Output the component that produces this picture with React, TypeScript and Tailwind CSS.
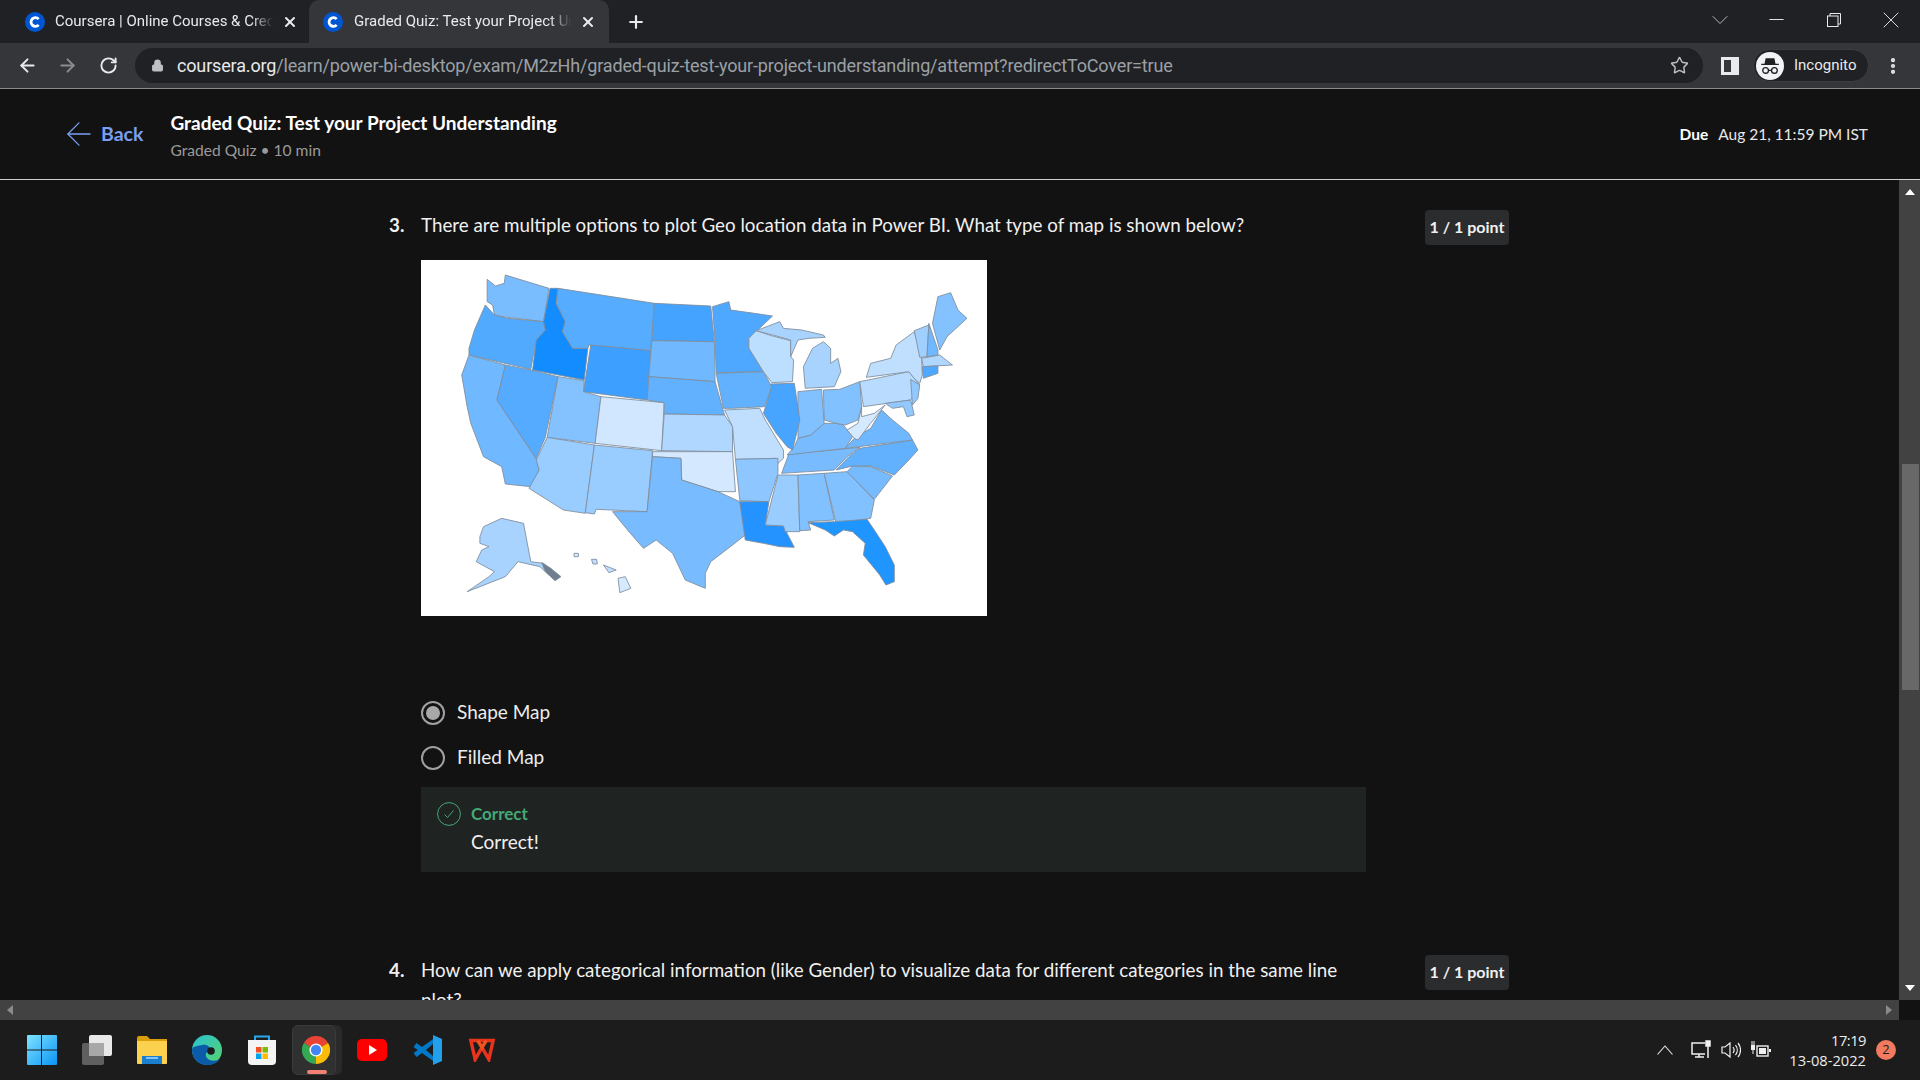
import React from "react";
import { ArrowLeft, ArrowRight, RotateCw, Lock, Star, X, Plus, ChevronDown, Minus, MoreVertical } from "lucide-react";

const states: [string, string][] = [
  ["#7abdff", "185,58 208,78 232,70 235,45 355,85 340,185 290,178 240,172 205,165 200,135 185,125"],
  ["#52aaff", "180,135 205,165 240,175 340,185 345,210 320,240 305,328 135,285 135,265 150,210"],
  ["#70b8ff", "135,285 235,315 212,420 322,600 328,630 305,680 235,672 225,620 175,590 140,490 130,440 115,345"],
  ["#55abff", "235,315 305,330 380,350 345,532 320,595 212,420"],
  ["#138cff", "358,85 380,85 375,130 400,185 392,215 420,265 462,265 452,360 310,330 320,240 345,210 340,185"],
  ["#56acff", "380,85 645,130 635,272 465,255 462,265 420,265 392,215 400,185 375,130"],
  ["#3d9fff", "470,255 635,272 625,420 450,395"],
  ["#84c2ff", "380,350 452,362 450,395 498,410 482,550 350,532"],
  ["#99ccff", "350,532 480,555 455,760 395,750 300,685 328,630 320,600"],
  ["#d0e7ff", "498,410 672,428 665,572 482,550"],
  ["#99ccff", "480,555 640,572 625,755 485,748 480,762 455,758"],
  ["#44a3ff", "645,130 800,138 810,245 638,242"],
  ["#70b8ff", "638,242 810,245 812,365 630,350"],
  ["#62b1ff", "630,350 812,365 838,465 672,462 672,428 625,420"],
  ["#b0d7ff", "672,462 838,465 860,500 860,575 665,572"],
  ["#d4e8ff", "640,575 860,575 868,695 820,695 720,660 718,595 640,590"],
  ["#78bbff", "640,590 718,595 720,660 820,695 880,725 895,825 860,855 800,905 785,940 785,985 730,960 695,880 650,840 615,865 575,815 530,755 625,755"],
  ["#4fa8ff", "805,140 850,125 855,150 920,160 970,168 905,235 905,265 945,335 815,338 812,245"],
  ["#62b1ff", "815,340 945,335 968,380 948,440 860,445 835,445"],
  ["#c0dfff", "838,450 935,445 950,480 1000,570 1000,595 985,610 980,595 868,598 860,500"],
  ["#8ec6ff", "868,598 985,595 985,640 960,725 880,722"],
  ["#2493ff", "880,725 960,725 950,795 1005,798 1010,820 1030,862 990,860 945,850 895,840"],
  ["#99ccff", "985,645 1040,645 1045,815 1005,815 1000,798 950,795"],
  ["#82c1ff", "1040,645 1112,640 1140,780 1068,785 1075,810 1045,812"],
  ["#82c1ff", "1112,640 1175,635 1250,720 1240,775 1145,790"],
  ["#1e95ff", "1068,788 1140,785 1230,778 1250,810 1280,860 1305,915 1305,965 1282,975 1265,945 1220,885 1225,850 1190,815 1165,810 1140,828 1115,810"],
  ["#76baff", "1175,635 1190,618 1240,620 1300,648 1250,718"],
  ["#62b1ff", "1145,630 1180,590 1210,565 1355,540 1370,570 1345,600 1305,645 1240,618 1190,618"],
  ["#78bbff", "995,640 1015,582 1210,562 1175,590 1140,630"],
  ["#78bbff", "1010,585 1030,560 1040,535 1075,525 1110,490 1145,490 1165,495 1190,530 1170,565"],
  ["#6fb7ff", "1170,565 1195,535 1240,505 1270,450 1300,480 1345,520 1355,540"],
  ["#d5e9ff", "1175,510 1205,490 1215,440 1215,470 1250,460 1280,435 1240,490 1205,540 1195,535"],
  ["#82c1ff", "1110,390 1155,388 1210,365 1215,440 1205,480 1170,495 1145,490 1112,480"],
  ["#82c1ff", "1040,395 1105,388 1112,490 1075,525 1040,535"],
  ["#47a4ff", "965,372 1030,370 1045,480 1025,570 1010,560 980,520 945,460 968,380"],
  ["#bcdeff", "905,235 925,212 970,228 1020,242 1020,290 1028,300 1025,365 968,368 945,335 905,265"],
  ["#a8d3ff", "1060,385 1055,320 1080,265 1110,245 1130,265 1130,310 1150,295 1158,335 1140,380"],
  ["#a8d3ff", "925,212 990,185 1000,205 1050,210 1110,225 1115,232 1070,235 1040,240 1020,290 1020,240 970,225"],
  ["#b8dbff", "1210,365 1345,335 1375,375 1350,420 1220,440"],
  ["#c0dfff", "1228,352 1240,310 1295,295 1310,255 1360,215 1380,290 1382,345 1375,370 1360,355 1345,335"],
  ["#90c8ff", "1350,358 1375,375 1370,415 1355,435"],
  ["#90c8ff", "1280,430 1350,420 1360,465 1340,470 1330,440 1300,445"],
  ["#a0d0ff", "1360,212 1400,195 1395,290 1375,292"],
  ["#70b8ff", "1400,190 1425,270 1425,285 1395,290"],
  ["#84c2ff", "1410,190 1425,110 1460,98 1480,150 1505,175 1450,230 1430,270"],
  ["#b0d7ff", "1380,295 1430,285 1465,315 1385,320"],
  ["#4fa8ff", "1382,320 1425,318 1425,340 1385,355"],
  ["#a8d3ff", "175,800 225,775 285,790 305,905 340,910 385,950 370,960 330,920 270,905 235,950 130,995 190,950 205,935 155,905 170,870 190,860 165,850 165,830"],
  ["#6f7f90", "335,908 360,925 388,950 372,962 345,935"],
  ["#d5e9ff", "545,955 565,950 580,985 550,998"],
  ["#d5e9ff", "424,880 436,880 436,890 424,890"],
  ["#c0dfff", "472,898 486,898 488,912 476,912"],
  ["#c0dfff", "505,915 540,930 520,938"],
];

function UsaMap() {
  return (
    <div className="w-[566px] h-[356px] bg-white overflow-hidden">
      <svg viewBox="3 0 1557 1068" preserveAspectRatio="none" className="w-full h-full blur-[0.5px]">
        {states.map((s, i) => (
          <polygon key={i} points={s[1]} fill={s[0]} stroke="#7f8d9c" strokeWidth="2.5" strokeLinejoin="round" />
        ))}
      </svg>
    </div>
  );
}

function Favicon() {
  return (
    <svg viewBox="0 0 20 20" className="w-5 h-5 shrink-0">
      <circle cx="10" cy="10" r="10" fill="#0056d2" />
      <path d="M13.6 7.2a4.3 4.3 0 1 0 0 5.6" fill="none" stroke="#fff" strokeWidth="2.8" />
    </svg>
  );
}

function Tab(props: { title: string; active?: boolean }) {
  return (
    <div className={props.active ? "w-[300px] h-[43px] flex items-center pl-[14px] bg-[#35363a] rounded-t-[10px]" : "w-[293px] h-[43px] flex items-center pl-[9px]"}>
      <Favicon />
      <div className={props.active ? "ml-[11px] w-[217px] h-[20px] leading-[18px] whitespace-nowrap overflow-hidden text-[15px] text-[#e8eaed] [mask-image:linear-gradient(to_right,black_90%,transparent)]" : "ml-[10px] w-[218px] h-[20px] leading-[18px] whitespace-nowrap overflow-hidden text-[15px] text-[#e8eaed] [mask-image:linear-gradient(to_right,black_90%,transparent)]"}>{props.title}</div>
      <X size={16} strokeWidth={3} className="ml-[9px] text-[#e8eaed]" />
    </div>
  );
}

function ChromeBar() {
  return (
    <div className="font-['Roboto',sans-serif]">
      <div className="h-[43px] bg-[#202124] flex items-center pl-[16px]">
        <Tab title="Coursera | Online Courses & Credentials" />
        <Tab title="Graded Quiz: Test your Project Understanding" active />
        <Plus size={20} strokeWidth={2.6} className="ml-[17px] text-[#e8eaed]" />
        <div className="ml-auto flex items-center text-[#e8eaed] pb-[4px] -ml-[2px]">
          <div className="w-[57px] flex justify-center"><ChevronDown size={28} strokeWidth={0.8} className="text-[#bdc1c6]" /></div>
          <div className="w-[57px] flex justify-center"><Minus size={23} strokeWidth={1} /></div>
          <div className="w-[57px] flex justify-center">
            <svg viewBox="0 0 14 14" className="w-[14px] h-[14px]" fill="none" stroke="#e8eaed" strokeWidth="1">
              <rect x="0.5" y="3" width="10.5" height="10.5" />
              <path d="M3 3V.5h10.5V11H11" />
            </svg>
          </div>
          <div className="w-[58px] pr-[1px] flex justify-center"><X size={28} strokeWidth={0.8} /></div>
        </div>
      </div>
      <div className="h-[45px] bg-[#35363a] flex items-center">
        <ArrowLeft size={21} strokeWidth={2.2} className="ml-[17px] text-[#e8eaed]" />
        <ArrowRight size={21} strokeWidth={2.2} className="ml-[19px] text-[#8a8c90]" />
        <RotateCw size={19} strokeWidth={2.4} className="ml-[21px] text-[#e8eaed]" />
        <div className="ml-[17px] w-[1568px] h-[35px] bg-[#202124] rounded-full flex items-center pl-[16px]">
          <Lock size={13} fill="#bdc1c6" strokeWidth={2} className="text-[#bdc1c6]" />
          <div className="ml-[13px] text-[18px] tracking-[-0.16px] whitespace-nowrap text-[#9aa0a6]">
            <span className="text-[#e8eaed]">coursera.org</span>/learn/power-bi-desktop/exam/M2zHh/graded-quiz-test-your-project-understanding/attempt?redirectToCover=true
          </div>
          <Star size={19} strokeWidth={1.8} className="ml-auto mr-[14px] text-[#bdc1c6]" />
        </div>
        <div className="ml-[18px] w-[18px] h-[18px] border-[3px] border-[#e8eaed] border-r-[8px]" />
        <div className="ml-[14px] w-[116px] h-[33px] rounded-full bg-[#202124] border border-[#3c3d41] flex items-center pl-[2px]">
          <div className="w-[28px] h-[28px] rounded-full bg-[#f1f3f4] flex items-center justify-center">
            <svg viewBox="0 0 20 20" className="w-[22px] h-[22px]" fill="#202124">
              <path d="M6 3h8l1 5h3v1H2V8h3z" />
              <circle cx="6" cy="14" r="2.6" fill="none" stroke="#202124" strokeWidth="1.2" />
              <circle cx="14" cy="14" r="2.6" fill="none" stroke="#202124" strokeWidth="1.2" />
              <path d="M8.500 14h3" stroke="#202124" strokeWidth="1.2" />
            </svg>
          </div>
          <span className="ml-[10px] text-[15px] text-[#e8eaed]">Incognito</span>
        </div>
        <MoreVertical size={20} strokeWidth={3} className="ml-[14px] text-[#e8eaed]" />
      </div>
      <div className="h-px bg-[#8a8a8a]" />
    </div>
  );
}

function PageHeader() {
  return (
    <div className="h-[91px] flex items-center border-b border-[#d0d0d0] pl-[60px] pr-[52px]">
      <ArrowLeft size={38} strokeWidth={0.8} className="text-[#7a9ef0]" />
      <span className="ml-[3px] font-bold text-[19.5px] text-[#7a9ef0]">Back</span>
      <div className="ml-[27px] pt-[3px]">
        <div className="font-bold text-[19px] leading-[27px] text-white">Graded Quiz: Test your Project Understanding</div>
        <div className="mt-[2px] text-[15.6px] leading-[25px] text-[#9a9a9a]">Graded Quiz • 10 min</div>
      </div>
      <div className="ml-auto text-[15.5px] text-[#e8e8e8] pt-[1px]">
        <span className="font-bold text-white mr-[10px]">Due</span>Aug 21, 11:59 PM IST
      </div>
    </div>
  );
}

function PointBadge() {
  return <div className="shrink-0 w-[84px] h-[35px] pb-[2px] rounded bg-[#2b2c2e] flex items-center justify-center font-bold text-[16px] text-[#f0f0f0]">1 / 1 point</div>;
}

function Radio(props: { label: string; checked?: boolean }) {
  return (
    <div className="h-[45px] flex items-center">
      <div className="w-[24px] h-[24px] rounded-full border-2 border-[#a0a0a0] flex items-center justify-center">
        {props.checked && <div className="w-[14px] h-[14px] rounded-full bg-[#a8a8a8]" />}
      </div>
      <span className="ml-[12px] text-[19px] text-[#ececec]">{props.label}</span>
    </div>
  );
}

function Question() {
  return (
    <div className="pl-[389px] pt-[30px]">
      <div className="flex h-[35px] w-[1120px]">
        <span className="w-[32px] font-bold text-[18.8px] leading-[30px] text-[#f0f0f0]">3.</span>
        <span className="text-[18.8px] leading-[30px] text-[#f0f0f0]">There are multiple options to plot Geo location data in Power BI. What type of map is shown below?</span>
        <div className="ml-auto"><PointBadge /></div>
      </div>
      <div className="ml-[32px] mt-[15px]">
        <UsaMap />
      </div>
      <div className="ml-[32px] mt-[74px] w-[945px]">
        <Radio label="Shape Map" checked />
        <Radio label="Filled Map" />
        <div className="mt-[7px] h-[85px] bg-[#1f2322] flex pl-[16px] pt-[15px]">
          <svg viewBox="0 0 24 24" className="w-[24px] h-[24px]" fill="none" stroke="#45a876" strokeWidth="1">
            <circle cx="12" cy="12" r="11.4" />
            <path d="M7.500 12.500l3 3 6-7" />
          </svg>
          <div className="ml-[10px]">
            <div className="font-bold text-[17px] leading-[24px] text-[#45a876]">Correct</div>
            <div className="text-[19px] leading-[32px] text-[#f0f0f0]">Correct!</div>
          </div>
        </div>
      </div>
      <div className="flex w-[1120px] mt-[83px]">
        <span className="w-[32px] font-bold text-[18.8px] leading-[30px] text-[#f0f0f0]">4.</span>
        <span className="w-[945px] text-[18.8px] leading-[30px] text-[#f0f0f0]">How can we apply categorical information (like Gender) to visualize data for different categories in the same line plot?</span>
        <div className="ml-auto"><PointBadge /></div>
      </div>
    </div>
  );
}

function VScroll() {
  return (
    <div className="w-[21px] bg-[#424242] flex flex-col items-center">
      <div className="mt-[9px] w-0 h-0 border-x-[5px] border-x-transparent border-b-[6px] border-b-white" />
      <div className="mt-[269px] ml-[1px] w-[17px] h-[226px] bg-[#686868]" />
      <div className="mt-auto mb-[9px] w-0 h-0 border-x-[5px] border-x-transparent border-t-[6px] border-t-white" />
    </div>
  );
}

function HScroll() {
  return (
    <div className="h-[20px] flex bg-[#121212]">
      <div className="w-[1899px] bg-[#424242] flex items-center px-[7px]">
        <div className="w-0 h-0 border-y-[5px] border-y-transparent border-r-[6px] border-r-[#8a8a8a]" />
        <div className="ml-auto w-0 h-0 border-y-[5px] border-y-transparent border-l-[6px] border-l-[#8a8a8a]" />
      </div>
    </div>
  );
}

function TaskIcon(props: { children: React.ReactNode }) {
  return <div className="w-[55px] h-[60px] flex items-center justify-center">{props.children}</div>;
}

function Taskbar() {
  return (
    <div className="h-[60px] bg-[#1c1c1c] flex items-center pl-[14px] font-['Open_Sans',sans-serif]">
      <TaskIcon>
        <svg viewBox="0 0 30 30" className="w-[30px] h-[30px]">
          <defs>
            <linearGradient id="win" x1="0" y1="0" x2="1" y2="1">
              <stop offset="0" stopColor="#7fe3ff" />
              <stop offset="1" stopColor="#0a94f5" />
            </linearGradient>
          </defs>
          <path d="M0 1a1 1 0 0 1 1-1h13v14.500H0zM15 0h14a1 1 0 0 1 1 1v13.500H15zM0 15.500h14V30H1a1 1 0 0 1-1-1zM15 15.500h15V29a1 1 0 0 1-1 1H15z" fill="url(#win)" />
        </svg>
      </TaskIcon>
      <TaskIcon>
        <svg viewBox="0 0 30 30" className="w-[30px] h-[30px]">
          <rect x="0" y="8" width="22" height="22" rx="2" fill="#5f5f5f" />
          <rect x="7" y="0" width="23" height="21" rx="2" fill="#e8e8e8" />
          <rect x="7" y="8" width="15" height="13" fill="#a8a8a8" />
        </svg>
      </TaskIcon>
      <TaskIcon>
        <svg viewBox="0 0 30 28" className="w-[30px] h-[28px]">
          <path d="M0 2a2 2 0 0 1 2-2h8l3 3h17v4H0z" fill="#d89f0a" />
          <path d="M0 5h30v22a1 1 0 0 1-1 1H1a1 1 0 0 1-1-1z" fill="#fcd14d" />
          <rect x="5" y="20" width="20" height="8" fill="#1b7fd0" />
          <rect x="9" y="21" width="12" height="2" fill="#7fc4f0" />
        </svg>
      </TaskIcon>
      <TaskIcon>
        <svg viewBox="0 0 30 30" className="w-[30px] h-[30px]">
          <defs>
            <linearGradient id="edge" x1="0" y1="0" x2="1" y2="1">
              <stop offset="0" stopColor="#2bc3d2" />
              <stop offset="1" stopColor="#56d26a" />
            </linearGradient>
          </defs>
          <circle cx="15" cy="15" r="15" fill="url(#edge)" />
          <path d="M0 15C0 24 7 30 15 30c6 0 10-2 13-6-5 3-13 2-14-3-1-3 2-5 4-5 1-4-3-7-8-6C4 11 0 12 0 15z" fill="#0c5ba8" />
          <circle cx="19" cy="16" r="3.800" fill="#1c1c1c" />
        </svg>
      </TaskIcon>
      <TaskIcon>
        <svg viewBox="0 0 30 30" className="w-[30px] h-[30px]">
          <path d="M8 6V1.500h14V6" fill="none" stroke="#2aa7e8" strokeWidth="2" />
          <path d="M1 5h28v21a4 4 0 0 1-4 4H5a4 4 0 0 1-4-4z" fill="#f4f4f4" />
          <rect x="9" y="12" width="5.500" height="5.500" fill="#f25022" />
          <rect x="15.500" y="12" width="5.500" height="5.500" fill="#7fba00" />
          <rect x="9" y="18.500" width="5.500" height="5.500" fill="#00a4ef" />
          <rect x="15.500" y="18.500" width="5.500" height="5.500" fill="#ffb900" />
        </svg>
      </TaskIcon>
      <div className="w-[55px] h-[60px] flex items-center justify-center relative">
        <div className="absolute left-[3px] top-[5px] w-[50px] h-[50px] rounded-[6px] bg-[#2a2a2a]" />
        <div className="absolute left-[3px] top-[5px] w-[44px] h-[50px] rounded-[6px] bg-[#303030] border border-[#3a3a3a]" />
        <svg viewBox="0 0 30 30" className="w-[28px] h-[28px] relative mr-[1px]">
          <path d="M15 15 L2 7.500A15 15 0 0 1 28 7.500Z" fill="#ea4335" />
          <path d="M15 15 L2 7.500A15 15 0 0 0 15 30Z" fill="#34a853" />
          <path d="M15 15 L15 30A15 15 0 0 0 28 7.500Z" fill="#fbbc05" />
          <circle cx="15" cy="15" r="7" fill="#fff" />
          <circle cx="15" cy="15" r="5.500" fill="#4285f4" />
        </svg>
        <div className="absolute left-[18px] bottom-[6px] w-[20px] h-[4px] rounded-full bg-[#f08070]" />
      </div>
      <TaskIcon>
        <svg viewBox="0 0 30 22" className="w-[30px] h-[22px]">
          <rect width="30" height="22" rx="5" fill="#f00" />
          <path d="M12 6l8 5-8 5z" fill="#fff" />
        </svg>
      </TaskIcon>
      <TaskIcon>
        <svg viewBox="0 0 30 30" className="w-[30px] h-[30px]" fill="none">
          <path d="M24 5L3 20M3 10l21 15" stroke="#0078c8" strokeWidth="5" />
          <path d="M21 0l9 4v22l-9 4z" fill="#23a0eb" />
          <path d="M21 9l-7 6 7 6z" fill="#1c1c1c" />
        </svg>
      </TaskIcon>
      <TaskIcon>
        <svg viewBox="0 0 30 28" className="w-[30px] h-[24px]" fill="none" stroke="#e8341c" strokeWidth="4">
          <path d="M2 3h26l-5 22-8-14-8 14z" />
          <path d="M10 3l5 8 5-8" stroke="#f0541e" />
        </svg>
      </TaskIcon>
      <div className="ml-auto flex items-center text-[#ececec] pr-[24px]">
        <svg viewBox="0 0 16 10" className="w-[16px] h-[10px] mr-[18px]" fill="none" stroke="#e8e8e8" strokeWidth="1.1">
          <path d="M.5 9.500L8 1l7.500 8.500" />
        </svg>
        <svg viewBox="0 0 20 20" className="w-[20px] h-[20px] mr-[10px]" fill="none" stroke="#f0f0f0" strokeWidth="1.5">
          <path d="M14 3H1v11h13" />
          <path d="M4 17h9M8 14v3" />
          <rect x="15" y="1" width="4" height="5" fill="#f0f0f0" />
          <path d="M17 6v12" />
        </svg>
        <svg viewBox="0 0 20 20" className="w-[20px] h-[20px] mr-[10px]" fill="none" stroke="#f0f0f0" strokeWidth="1.2">
          <path d="M1 7v6h3l5 4V3L4 7z" />
          <path d="M12 7a5 5 0 0 1 0 6M14.500 5a8 8 0 0 1 0 10M17 3a11 11 0 0 1 0 14" />
        </svg>
        <svg viewBox="0 0 20 18" className="w-[20px] h-[18px] mr-[11px]" fill="#f0f0f0">
          <rect x="0" y="4" width="4" height="5" />
          <path d="M1 0v4M3 0v4M2 9v4" stroke="#f0f0f0" strokeWidth="1" />
          <rect x="6" y="5" width="11" height="10" fill="#1c1c1c" stroke="#f0f0f0" strokeWidth="1.4" />
          <rect x="8" y="7" width="7" height="6" />
          <rect x="18" y="8" width="2" height="3" />
        </svg>
        <div className="text-right text-[14.7px] leading-[20px] w-[84px]">
          <div className="tracking-[-0.5px]">17:19</div>
          <div className="whitespace-nowrap">13-08-2022</div>
        </div>
        <div className="ml-[10px] w-[20px] h-[20px] rounded-full bg-[#f27a5e] text-[#1c1c1c] text-[13px] flex items-center justify-center">2</div>
      </div>
    </div>
  );
}

export default function App() {
  return (
    <div className="w-[1920px] h-[1080px] overflow-hidden flex flex-col bg-[#121212] font-['Lato',sans-serif]">
      <ChromeBar />
      <PageHeader />
      <div className="flex-1 flex min-h-0">
        <div className="flex-1 overflow-hidden">
          <Question />
        </div>
        <VScroll />
      </div>
      <HScroll />
      <Taskbar />
    </div>
  );
}
